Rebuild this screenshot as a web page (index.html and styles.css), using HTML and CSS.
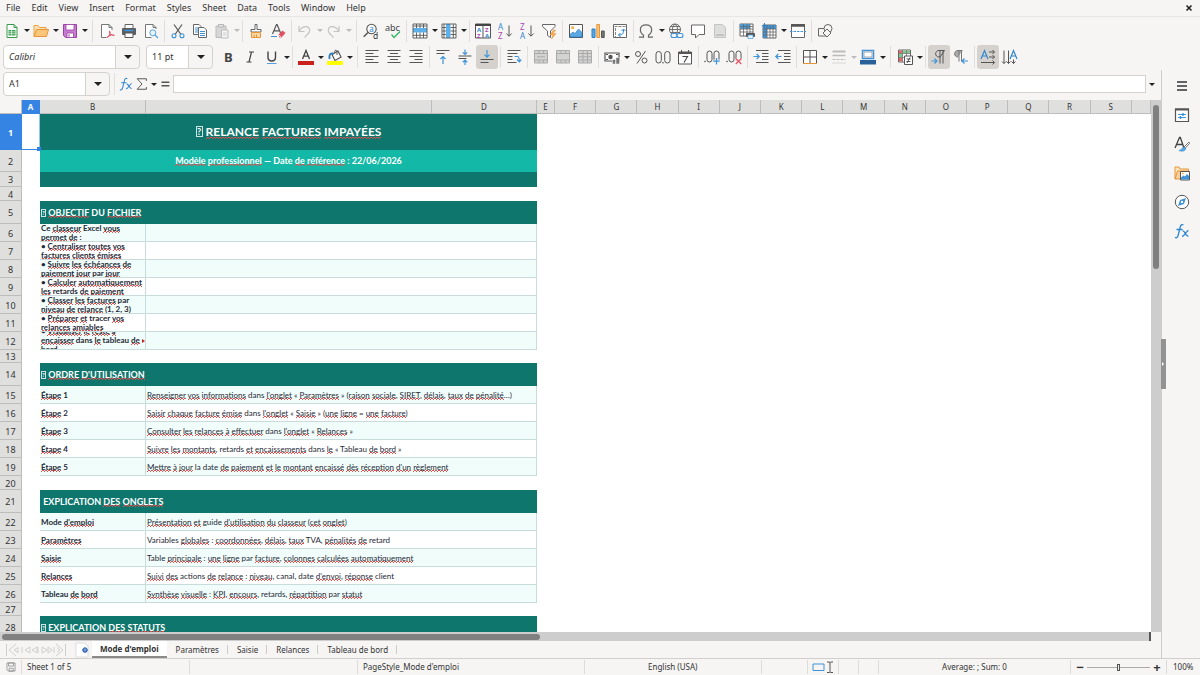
FILE: index.html
```html
<!DOCTYPE html>
<html lang="fr">
<head>
<meta charset="utf-8">
<title>Relance factures impayées</title>
<link rel="stylesheet" href="styles.css">
</head>
<body>
<nav class="menubar" lang="en">
  <button>File</button><button>Edit</button><button>View</button><button>Insert</button><button>Format</button><button>Styles</button><button>Sheet</button><button>Data</button><button>Tools</button><button>Window</button><button>Help</button>
  <button class="close" aria-label="Close"><svg viewBox="0 0 8 8"><path d="M1.5 1.5l5 5M6.5 1.5l-5 5" stroke="#222" stroke-width="1.6"/></svg></button>
</nav>

<div class="toolbar" role="toolbar" aria-label="Standard">
  <button class="ic" aria-label="New"><svg viewBox="0 0 16 16"><path d="M3 1.5h7l3 3v10H3z" fill="#fff" stroke="#3a9a4c"/><path d="M10 1.5v3h3" stroke="#3a9a4c"/><path d="M4.5 7h7v5.500h-7z" fill="#41a355"/><path d="M4.500 8.800h7M4.500 10.700h7M7.500 7v5.500" stroke="#fff" stroke-width=".6"/></svg></button><button class="ar" aria-label="New options"></button>
  <button class="ic" aria-label="Open"><svg viewBox="0 0 16 16"><path d="M1 13.500v-11h4l1.500 2H13v3" fill="#fbe0b4" stroke="#e8a33d"/><path d="M1 13.500l2.500-7H15.500l-2 7z" fill="#fbc679" stroke="#e8953a"/></svg></button><button class="ar" aria-label="Open options"></button>
  <button class="ic" aria-label="Save"><svg viewBox="0 0 16 16"><path d="M1.500 1.500h13v13h-11l-2-2z" fill="#c77bd0" stroke="#9c41a8"/><path d="M4 1.500h8v5.500H4z" fill="#fff" stroke="#9c41a8" stroke-width=".8"/><path d="M5 10h6.500v4.500H5z" fill="#fff" stroke="#9c41a8" stroke-width=".8"/><path d="M7 11.200v2.500" stroke="#9c41a8"/></svg></button><button class="ar" aria-label="Save options"></button>
  <i class="sep wide"></i>
  <button class="ic" aria-label="Export as PDF"><svg viewBox="0 0 16 16"><path d="M13 7V4.500l-3-3H2.500v13h5" fill="#fff" stroke="#777"/><path d="M10 1.500v3h3" stroke="#777"/><path d="M8 14.500c3-2 3.500-5 2.700-6.200-1.300.7 1.300 4.500 4.300 4-1-1.300-4.500-.3-7 2.200z" stroke="#e05a6b" stroke-width="1.100"/></svg></button>
  <button class="ic" aria-label="Print"><svg viewBox="0 0 16 16"><path d="M4 5V1.500h8V5" fill="#fff" stroke="#666"/><rect x="1" y="5" width="14" height="7" rx="1" fill="#5a5f63"/><path d="M3.500 7.500h9" stroke="#3f93d6" stroke-width="1.500"/><path d="M4 10h8v4.500H4z" fill="#fff" stroke="#555"/></svg></button>
  <button class="ic" aria-label="Print preview"><svg viewBox="0 0 16 16"><path d="M13 6V4.500l-3-3H2.500v13h6" fill="#fff" stroke="#777"/><path d="M10 1.500v3h3" stroke="#777"/><circle cx="9.800" cy="9.800" r="3" fill="#e8f4fd" stroke="#57a2dd"/><path d="M12 12l3 3" stroke="#57a2dd" stroke-width="1.300"/></svg></button>
  <i class="sep"></i>
  <button class="ic" aria-label="Cut"><svg viewBox="0 0 16 16"><path d="M4 1.500l7 10M12 1.500l-7 10" stroke="#555" stroke-width="1.200"/><circle cx="4" cy="12.800" r="2" stroke="#3f93d6" stroke-width="1.100"/><circle cx="12" cy="12.800" r="2" stroke="#3f93d6" stroke-width="1.100"/></svg></button>
  <button class="ic" aria-label="Copy"><svg viewBox="0 0 16 16"><path d="M1.500 1.500h5.500l2 2v8H1.500z" fill="#fff" stroke="#666"/><path d="M3 5h4M3 7h3M3 9h3" stroke="#3f93d6"/><path d="M6.500 4.500h5.500l2.500 2.500v7.500h-8z" fill="#fff" stroke="#666"/><path d="M8 8.500h5M8 10.500h5M8 12.500h5" stroke="#3f93d6"/></svg></button>
  <button class="ic" aria-label="Paste"><svg viewBox="0 0 16 16"><path d="M2 3h10v11.500H2z" fill="#d7d7d5" stroke="#bbb"/><path d="M4.500 1.500h5V4h-5z" fill="#e8e8e8" stroke="#b3b3b3"/><path d="M7.500 7h6.500v8H7.500z" fill="#f6f6f6" stroke="#bbb"/><path d="M9 10h3.500M9 12h3.500" stroke="#ccc"/></svg></button><button class="ar off" aria-label="Paste options"></button>
  <i class="sep"></i>
  <button class="ic" aria-label="Clone formatting"><svg viewBox="0 0 16 16"><path d="M7 1.500h2v5h4V9H3V6.500h4z" fill="#fff" stroke="#666"/><path d="M3.500 9.500h9v5h-9z" fill="#fbd9a5" stroke="#e8953a"/><path d="M6 11.500v3M8.500 11.500v3" stroke="#e8953a"/></svg></button>
  <button class="ic" aria-label="Clear formatting"><svg viewBox="0 0 16 16"><path d="M2.500 11L6.500 1.500h.6L11 11M4 7.800h5.800" stroke="#555" stroke-width="1.200"/><path d="M1 13.500h6" stroke="#3f93d6"/><path d="M8.500 11.500l4-4 3 2.500-4 4.500h-2z" fill="#e35260"/><path d="M8.500 11.500l2.700 2.700" stroke="#fff" stroke-width=".7"/></svg></button>
  <i class="sep"></i>
  <button class="ic" aria-label="Undo"><svg viewBox="0 0 16 16"><path d="M2 3v5.500h5.500M2.300 8.300C5 2.500 12 2 12.700 7c.4 3-3 5-5.200 7.500" stroke="#c4c4c2" stroke-width="1.200"/></svg></button><button class="ar off" aria-label="Undo steps"></button>
  <button class="ic" aria-label="Redo"><svg viewBox="0 0 16 16"><path d="M13 3v5.500H7.500M12.700 8.300C10 2.500 3 2 2.300 7c-.4 3 3 5 5.200 7.500" stroke="#c4c4c2" stroke-width="1.200"/></svg></button><button class="ar off" aria-label="Redo steps"></button>
  <i class="sep wide"></i>
  <button class="ic" aria-label="Find and replace"><svg viewBox="0 0 16 16"><circle cx="8.500" cy="6" r="4.700" fill="#fff" stroke="#555" stroke-width="1.100"/><path d="M5 9.500L.7 13.800" stroke="#555" stroke-width="1.500"/><text x="6.300" y="8.500" font-size="8" fill="#2680cc">a</text><text x="10" y="15.500" font-size="8.500" fill="#333" stroke="#f6f5f4" stroke-width="1.500" paint-order="stroke">d</text></svg></button>
  <button class="ic" aria-label="Spelling"><svg viewBox="0 0 16 16"><text x="0" y="8" font-size="9" fill="#444">abc</text><path d="M6.500 11.500l2.500 3 6-6" stroke="#35b464" stroke-width="1.300"/></svg></button>
  <i class="sep"></i>
  <button class="ic" aria-label="Row"><svg viewBox="0 0 16 16"><path d="M1 1h14v14H1z" fill="#fff"/><path d="M1 5h14v4.500H1z" fill="#5cb0ec"/><path d="M1 1h14v14H1zM4.500 1v4M8 1v4M11.500 1v4M4.500 9.500V15M8 9.500V15M11.500 9.500V15M1 12.300h14M1 3h14" stroke="#555" stroke-width=".9"/></svg></button><button class="ar" aria-label="Row options"></button>
  <button class="ic" aria-label="Column"><svg viewBox="0 0 16 16"><path d="M1 1h14v14H1z" fill="#fff"/><path d="M5 1h4.500v14H5z" fill="#5cb0ec"/><path d="M1 1h14v14H1zM1 4.500h4M1 8h4M1 11.500h4M9.500 4.500H15M9.500 8H15M9.500 11.500H15M12.300 1v14M3 1v14" stroke="#555" stroke-width=".9"/></svg></button><button class="ar" aria-label="Column options"></button>
  <i class="sep"></i>
  <button class="ic" aria-label="Sort"><svg viewBox="0 0 16 16"><path d="M.5 1h15v14H.5z" fill="#fff" stroke="#555"/><path d="M0 2h16" stroke="#444" stroke-width="2"/><path d="M8 2v13" stroke="#555"/><g font-size="6" font-weight="bold"><text x="2" y="8.500" fill="#2f86d0">A</text><text x="2" y="14.500" fill="#a94ab5">Z</text><text x="10" y="8.500" fill="#a94ab5">Z</text><text x="10" y="14.500" fill="#2f86d0">A</text></g></svg></button>
  <button class="ic" aria-label="Sort ascending"><svg viewBox="0 0 16 16"><text x="1" y="7" font-size="8" fill="#2f86d0">A</text><text x="1" y="15.500" font-size="8" fill="#a94ab5">Z</text><path d="M12 2.500v10.500M9.300 10.500l2.700 2.700 2.700-2.700" stroke="#555"/></svg></button>
  <button class="ic" aria-label="Sort descending"><svg viewBox="0 0 16 16"><text x="1" y="7" font-size="8" fill="#a94ab5">Z</text><text x="1" y="15.500" font-size="8" fill="#2f86d0">A</text><path d="M12 2.500v10.500M9.300 10.500l2.700 2.700 2.700-2.700" stroke="#555"/></svg></button>
  <button class="ic" aria-label="AutoFilter"><svg viewBox="0 0 16 16"><path d="M1.500 1.500h12.500v2L9.500 8v6.500l-3-2V8l-5-4.500z" fill="#fff" stroke="#666"/><path d="M12.500 7l-3.500 5h3l-1.500 4 4.500-5.500h-3L14.500 7z" fill="#f9b057" stroke="#e8953a" stroke-width=".6"/></svg></button>
  <i class="sep"></i>
  <button class="ic" aria-label="Insert image"><svg viewBox="0 0 16 16"><path d="M1.500 1.500h13v13h-13z" fill="#fff" stroke="#555"/><circle cx="4.700" cy="4.700" r="1.600" fill="#f8b25c"/><path d="M2 14v-2.500l3-2.500 2 1.500L10.500 6 14 9.500V14z" fill="#5aa9e3" stroke="#2f7fc1" stroke-width=".7"/></svg></button>
  <button class="ic" aria-label="Insert chart"><svg viewBox="0 0 16 16"><path d="M2 6h3v8.500H2z" fill="#5aa9e3" stroke="#2f7fc1"/><path d="M6.800 1.500h2.700v13H6.800z" fill="#fbc679" stroke="#e8953a"/><path d="M11.500 8h2.700v6.500h-2.700z" fill="#777" stroke="#555"/></svg></button>
  <button class="ic" aria-label="Pivot table"><svg viewBox="0 0 16 16"><path d="M1.500 1.500h13v13h-13z" fill="#fff" stroke="#666"/><path d="M2.500 3.500h11.500M3.500 5v9" stroke="#888" stroke-dasharray="3 1"/><path d="M6.500 12c4 0 5-1 5-5.500M9.500 8l2-2 2 2M8.500 10l-2 2 2 2" stroke="#2f86d0"/></svg></button>
  <i class="sep"></i>
  <button class="ic" aria-label="Special character"><svg viewBox="0 0 16 16"><path d="M1 14.200h4.500v-2C1 9 1 1.800 8 1.800S15 9 10.500 12.200v2H15" stroke="#666" stroke-width="1.200" transform="translate(-1 0)"/></svg></button><button class="ar" aria-label="More characters"></button>
  <button class="ic" aria-label="Hyperlink"><svg viewBox="0 0 16 16"><circle cx="7" cy="6.500" r="5.500" stroke="#666"/><path d="M1.500 6.500h11M7 1c-3.500 3-3.500 8 0 11M7 1c3.500 3 3.500 8 0 11M2.500 3.500h9M2.500 9.500h9" stroke="#666" stroke-width=".9"/><rect x="3" y="10.500" width="6" height="4" rx="2" fill="#f6f5f4" stroke="#3f93d6" stroke-width="1.100"/><rect x="9" y="10.500" width="6" height="4" rx="2" fill="#f6f5f4" stroke="#3f93d6" stroke-width="1.100"/></svg></button>
  <button class="ic" aria-label="Comment"><svg viewBox="0 0 16 16"><path d="M1.500 2h13v9.500H9L5.500 15v-3.500h-4z" fill="#fff" stroke="#666"/></svg></button>
  <button class="ic" aria-label="Headers and footers"><svg viewBox="0 0 16 16"><path d="M2.500 1.500h8l3 3v10h-11z" fill="#dededc" stroke="#c4c4c2"/><path d="M4 11h8v2H4z" fill="#c4c4c2"/></svg></button>
  <i class="sep"></i>
  <button class="ic" aria-label="Print area"><svg viewBox="0 0 16 16"><path d="M1 1h13v12H1z" fill="#fff" stroke="#666"/><path d="M1 1h10v5H1z" fill="#4a9fde"/><path d="M1 3.500h13M1 6h13M1 9h13M4.500 1v12M8 1v12M11 1v12" stroke="#666" stroke-width=".8"/><rect x="7" y="10" width="9" height="4" rx="1" fill="#555"/><path d="M9 12h5v3.500H9z" fill="#e8f4fd" stroke="#4a9fde" stroke-width=".7"/></svg></button>
  <button class="ic" aria-label="Freeze rows and columns"><svg viewBox="0 0 16 16"><path d="M2 2h13v13H2z" fill="#fff" stroke="#666"/><path d="M2 2h13v4H2zM2 6h4v9H2z" fill="#3f93d6"/><path d="M2 6h13M2 9h13M2 12h13M6 2v13M9 2v13M12 2v13" stroke="#666" stroke-width=".8"/><path d="M3.500 0v5M1 2.500h5" stroke="#2f7fc1"/></svg></button><button class="ar" aria-label="Freeze options"></button>
  <button class="ic" aria-label="Split window"><svg viewBox="0 0 16 16"><path d="M1.500 1.500h13v13h-13z" fill="#fff" stroke="#666"/><path d="M1 2.500h14" stroke="#555" stroke-width="2.500"/><path d="M0 8.500h16" stroke="#3f93d6" stroke-dasharray="2.500 1"/></svg></button>
  <i class="sep"></i>
  <button class="ic" aria-label="Draw functions"><svg viewBox="0 0 16 16"><path d="M1.500 5.500h7.500v7.500H1.500z" stroke="#666"/><circle cx="11" cy="5.500" r="4" fill="#f6f5f4" stroke="#666"/><path d="M10 6l4 4-4 4-4-4z" fill="#f6f5f4" stroke="#666"/></svg></button>
</div>

<div class="toolbar second" role="toolbar" aria-label="Formatting">
  <span class="combo font"><select aria-label="Font name"><option>Calibri</option></select></span>
  <span class="combo size"><select aria-label="Font size"><option>11 pt</option></select></span>
  <button class="ic" aria-label="Bold"><svg viewBox="0 0 16 16"><text x="4" y="13" font-size="13" font-weight="bold" fill="#444">B</text></svg></button>
  <button class="ic" aria-label="Italic"><svg viewBox="0 0 16 16"><path d="M7 3h5M4.500 13h5M9.500 3L7 13" stroke="#444" stroke-width="1.200"/></svg></button>
  <button class="ic" aria-label="Underline"><svg viewBox="0 0 16 16"><path d="M4 2.500v5.700c0 5 7.500 5 7.500 0V2.500" stroke="#444" stroke-width="1.400"/><path d="M3 14.500h9.500" stroke="#5a9fdc"/></svg></button><button class="ar" aria-label="Underline styles"></button>
  <i class="sep"></i>
  <button class="ic" aria-label="Font colour"><svg viewBox="0 0 16 16"><path d="M4.500 10L8 1.500 11.500 10M5.700 7.200h4.600" stroke="#444" stroke-width="1.300"/><path d="M0 12h16v4H0z" fill="#c9211e"/></svg></button><button class="ar" aria-label="Font colours"></button>
  <button class="ic" aria-label="Background colour"><svg viewBox="0 0 16 16"><path d="M5 5.500l6-3.500 3 6-6 3.500z" fill="#fff" stroke="#555" stroke-width="1.200"/><path d="M8 4C7 1 9.500 0 10 2.500V6" stroke="#555"/><path d="M2.500 10c-.5-5 1-6 4-5.500" stroke="#2f7fc1" stroke-width="1.800"/><path d="M0 12h16v4H0z" fill="#ff0"/></svg></button><button class="ar" aria-label="Background colours"></button>
  <i class="sep wide"></i>
  <button class="ic" aria-label="Align left"><svg viewBox="0 0 16 16"><path d="M1.500 1.500h13M1.500 4.500h8M1.500 7.500h13M1.500 10.500h8M1.500 13.500h13" stroke="#555"/></svg></button>
  <button class="ic" aria-label="Align centre"><svg viewBox="0 0 16 16"><path d="M1.500 1.500h13M4 4.500h8M1.500 7.500h13M4 10.500h8M1.500 13.500h13" stroke="#555"/></svg></button>
  <button class="ic" aria-label="Align right"><svg viewBox="0 0 16 16"><path d="M1.500 1.500h13M6.500 4.500h8M1.500 7.500h13M6.500 10.500h8M1.500 13.500h13" stroke="#555"/></svg></button>
  <i class="sep"></i>
  <button class="ic" aria-label="Align top"><svg viewBox="0 0 16 16"><path d="M1.500 1.500h13M1.500 4.500h8" stroke="#555"/><path d="M8 15V7.500M5.500 10L8 7.500l2.500 2.500" stroke="#3f93d6" stroke-width="1.200"/></svg></button>
  <button class="ic" aria-label="Centre vertically"><svg viewBox="0 0 16 16"><path d="M1.500 7h13M1.500 9.500h8" stroke="#555"/><path d="M8 .5v5M5.800 3.300L8 5.500l2.200-2.200M8 16v-4.500M5.800 13.300L8 11.200l2.200 2.100" stroke="#3f93d6" stroke-width="1.200"/></svg></button>
  <button class="ic on" aria-label="Align bottom"><svg viewBox="0 0 16 16"><path d="M1.500 10.500h13M1.500 13.500h8" stroke="#555"/><path d="M8 1v7M5.500 5.700L8 8.200l2.500-2.500" stroke="#3f93d6" stroke-width="1.200"/></svg></button>
  <i class="sep"></i>
  <button class="ic" aria-label="Wrap text"><svg viewBox="0 0 16 16"><path d="M1.500 1.500h13M1.500 4.500h10M1.500 7.500h5M1.500 10.500h5M1.500 13.500h9" stroke="#555"/><path d="M8.500 7.500h3c1.500 0 1.800 1 1.800 5M11 10.500l2.300 2.300 2-2.300" stroke="#3f93d6" stroke-width="1.200"/></svg></button>
  <i class="sep"></i>
  <button class="ic" aria-label="Merge and centre"><svg viewBox="0 0 16 16"><path d="M1.500 1.500h13v12.500h-13z" fill="#d3d3d1" stroke="#aaa"/><path d="M1.500 4.500h13M1.500 11h13M6 1.500v3M10.500 1.500v3M6 11v3M10.500 11v3M4 7.800h8" stroke="#aaa"/></svg></button>
  <button class="ic" aria-label="Merge cells"><svg viewBox="0 0 16 16"><path d="M1.500 1.500h13v12.500h-13z" fill="#d3d3d1" stroke="#aaa"/><path d="M1.500 4.500h13M1.500 11h13M6 1.500v3M10.500 1.500v3M6 11v3M10.500 11v3" stroke="#aaa"/></svg></button>
  <button class="ic" aria-label="Split cells"><svg viewBox="0 0 16 16"><path d="M1.500 1.500h13v12.500h-13z" fill="#d3d3d1" stroke="#aaa"/><path d="M1.500 4.500h13M1.500 7.800h13M1.500 11h13M6 1.500v12.500M10.500 1.500v12.500" stroke="#aaa"/></svg></button>
  <i class="sep"></i>
  <button class="ic" aria-label="Currency"><svg viewBox="0 0 16 16"><path d="M1 4h14v8H1z" fill="#fff" stroke="#555" stroke-width="1.200"/><circle cx="6.500" cy="8" r="2.200" fill="#555"/><path d="M2 5.500h2M2 10.500h2M12 5.500h2" stroke="#555"/><path d="M8.500 10.500h3V15h-3zM12 8.500h3.500V15H12z" fill="#777" stroke="#f6f5f4" stroke-width=".5"/></svg></button><button class="ar" aria-label="Currency formats"></button>
  <button class="ic" aria-label="Percent"><svg viewBox="0 0 16 16"><circle cx="5" cy="5" r="2.500" stroke="#555"/><circle cx="11.500" cy="11.500" r="2.500" stroke="#555"/><path d="M12.500 2L4 14.500" stroke="#555"/></svg></button>
  <button class="ic" aria-label="Number"><svg viewBox="0 0 16 16"><rect x="1" y="2.500" width="5.300" height="11.500" rx="2.600" stroke="#555"/><rect x="9.700" y="2.500" width="5.300" height="11.500" rx="2.600" stroke="#555"/><circle cx="8" cy="13.700" r=".8" fill="#555"/></svg></button>
  <button class="ic" aria-label="Date"><svg viewBox="0 0 16 16"><path d="M1.500 3h13v12h-13z" fill="#fff" stroke="#555"/><path d="M1.500 4h13" stroke="#555" stroke-width="2"/><path d="M4.500 1v3M11.500 1v3" stroke="#555"/><path d="M5.500 7.500h5L7 13.500" stroke="#444" stroke-width="1.100"/></svg></button>
  <i class="sep"></i>
  <button class="ic" aria-label="Add decimal place"><svg viewBox="0 0 16 16"><circle cx="1" cy="12.500" r=".8" fill="#555"/><rect x="3" y="2" width="5" height="11" rx="2.500" stroke="#555"/><rect x="10" y="2" width="5" height="11" rx="2.500" stroke="#555"/><path d="M12.500 9v6.500M9.200 12.200h6.500" stroke="#f6f5f4" stroke-width="3"/><path d="M12.500 9v6.500M9.200 12.200h6.500" stroke="#3f93d6" stroke-width="1.200"/></svg></button>
  <button class="ic" aria-label="Delete decimal place"><svg viewBox="0 0 16 16"><circle cx="1" cy="12.500" r=".8" fill="#555"/><rect x="3" y="2" width="5" height="11" rx="2.500" stroke="#555"/><rect x="10" y="2" width="5" height="11" rx="2.500" stroke="#555"/><path d="M9.800 9.500l5.500 5.500M15.300 9.500L9.800 15" stroke="#f6f5f4" stroke-width="3"/><path d="M9.800 9.500l5.500 5.500M15.300 9.500L9.800 15" stroke="#e35260" stroke-width="1.200"/></svg></button>
  <i class="sep"></i>
  <button class="ic" aria-label="Increase indent"><svg viewBox="0 0 16 16"><path d="M3 1.500h12.500M9 4.500h6.500M9 7.500h6.500M9 10.500h6.500M3 13.500h12.500" stroke="#555"/><path d="M.5 7.500h5.500M3.700 5L6.200 7.500l-2.500 2.500" stroke="#3f93d6" stroke-width="1.200"/></svg></button>
  <button class="ic" aria-label="Decrease indent"><svg viewBox="0 0 16 16"><path d="M3 1.500h12.500M9 4.500h6.500M9 7.500h6.500M9 10.500h6.500M3 13.500h12.500" stroke="#555"/><path d="M1 7.500h5.500M3.300 5L.8 7.500l2.500 2.500" stroke="#3f93d6" stroke-width="1.200"/></svg></button>
  <i class="sep"></i>
  <button class="ic" aria-label="Borders"><svg viewBox="0 0 16 16"><path d="M1.500 14.500v-13h13v13M8 1.500v13M1.500 8h13" stroke="#555" fill="#fff"/><path d="M1 14.500h14" stroke="#e8953a"/></svg></button><button class="ar" aria-label="Border styles"></button>
  <button class="ic" aria-label="Border line style"><svg viewBox="0 0 16 16"><path d="M1.500 2.500h13" stroke="#bbb" stroke-width="2"/><path d="M1.500 6.500h13" stroke="#bbb" stroke-width="1.500"/><path d="M1.500 10.500h13" stroke="#bbb" stroke-dasharray="3 1"/><path d="M1.500 14h13" stroke="#bbb" stroke-dasharray="1 1"/></svg></button><button class="ar off" aria-label="Line styles"></button>
  <button class="ic" aria-label="Border colour"><svg viewBox="0 0 16 16"><path d="M2.500 1.500h11v8h-11z" fill="#fff" stroke="#3f93d6" stroke-width="1.500"/><path d="M4 3h8v5H4z" stroke="#777" stroke-width=".6"/><path d="M0 11h16v4.500H0z" fill="#2a6099"/></svg></button><button class="ar" aria-label="Border colours"></button>
  <i class="sep wide"></i>
  <button class="ic" aria-label="Conditional formatting"><svg viewBox="0 0 16 16"><path d="M1.500 1h12v12h-12z" fill="#fff" stroke="#666"/><path d="M2 1.500h3.500v3H2zM2 8.500h3.500v4H2z" fill="#e46a6a"/><path d="M6 1.500h7v3H6zM2 5h3.500v3.500H2z" fill="#7cc98a"/><path d="M1.500 4.500h12M1.500 8.500h12M5.500 1v12M9.500 1v12" stroke="#777" stroke-width=".8"/><path d="M7.500 7h8v8.500h-8z" fill="#fff" stroke="#555"/><path d="M9.500 10h4M9.500 12.500h4M13 8.500l-3 5.500" stroke="#444" stroke-width=".9"/></svg></button><button class="ar" aria-label="Conditional options"></button>
  <i class="sep"></i>
  <button class="ic on" aria-label="Left to right"><svg viewBox="0 0 16 16"><path d="M13.500 1.500H8c-4.500 0-4.500 6.500 0 6.500h1zM9 1.500v13M12 1.500v13" stroke="#555"/><path d="M.5 12H6M3.500 9.500L6 12l-2.500 2.500" stroke="#3f93d6" stroke-width="1.200"/></svg></button>
  <button class="ic" aria-label="Right to left"><svg viewBox="0 0 16 16"><path d="M9.500 1.500H5c-4.500 0-4.500 6.500 0 6.500z" fill="#aaa"/><path d="M9.500 1.500H5c-4.500 0-4.500 6.500 0 6.500M6 1.500v11M8.500 1.500v11" stroke="#777"/><path d="M9 12h6M11.500 9.500L9 12l2.500 2.500" stroke="#3f93d6" stroke-width="1.200"/></svg></button>
  <i class="sep"></i>
  <button class="ic on" aria-label="Horizontal text"><svg viewBox="0 0 16 16"><path d="M1 10L4.500 1.500 8 10M2.300 7h4.400" stroke="#2f86d0" stroke-width="1.200"/><path d="M9 3h5.500M9 8h5.500M1 13.500h13.500M12.500 1l2 2-2 2M12.500 6l2 2-2 2M12.500 11.500l2 2-2 2" stroke="#555"/></svg></button>
  <button class="ic" aria-label="Vertical text"><svg viewBox="0 0 16 16"><path d="M8 10l3.500-8.500L15 10M9.300 7h4.400" stroke="#2f86d0" stroke-width="1.200"/><path d="M2 1.500v13M6.500 1.500v13M11.500 10.500v4M0 12.500l2 2 2-2M4.500 12.500l2 2 2-2M9.500 12.500l2 2 2-2" stroke="#555"/></svg></button>
</div>

<div class="work">
  <main>
    <div class="formulabar">
      <span class="namebox"><input type="text" value="A1" aria-label="Name box"><button class="ar" aria-label="Named ranges"></button></span>
      <i class="sep wide"></i>
      <button class="fb" aria-label="Function wizard"><svg viewBox="0 0 16 16"><path d="M1 14.500c2 1 3-1 3.500-3.500L6.200 4C6.600 2 8 1 9.500 2M2.500 6.500h6" stroke="#2f86d0" stroke-width="1.200"/><path d="M8.500 8c2.500-1 3 6 6 5M14.500 7.500c-2 0-4 6-6.500 6" stroke="#2f86d0" stroke-width="1.200"/></svg></button>
      <button class="fb" aria-label="Sum"><svg viewBox="0 0 16 16"><path d="M13 4.500V2H2.500L8 8l-5.500 6H13v-2.500" stroke="#555" stroke-width="1.100"/></svg></button>
      <button class="ar" aria-label="Sum options"></button>
      <button class="fb" aria-label="Formula"><svg viewBox="0 0 16 16"><path d="M4 6h9M4 10h9" stroke="#555" stroke-width="1.600"/></svg></button>
      <input class="formula" type="text" aria-label="Formula input">
      <button class="ar" aria-label="Expand formula bar"></button>
    </div>

    <div class="viewport">
      <div class="grid">
        <table>
          <colgroup><col class="rh"><col class="ca"><col class="cb"><col class="cc"><col class="cd"><col class="ca"><col span="14"><col class="ct"></colgroup>
          <thead>
            <tr><th class="corner"></th><th class="sel">A</th><th>B</th><th>C</th><th>D</th><th>E</th><th>F</th><th>G</th><th>H</th><th>I</th><th>J</th><th>K</th><th>L</th><th>M</th><th>N</th><th>O</th><th>P</th><th>Q</th><th>R</th><th>S</th><th></th></tr>
          </thead>
          <tbody>
            <tr class="h36"><th class="sel">1</th><td class="cursor"></td><td colspan="3" class="title"><span class="tofu big">?</span> <u>RELANCE</u> <u>FACTURES</u> <u>IMPAYÉES</u></td></tr>
            <tr class="h22"><th>2</th><td></td><td colspan="3" class="subtitle"><u>Modèle</u> <u>professionnel</u> — Date <u>de</u> <u>référence</u> : 22/06/2026</td></tr>
            <tr class="h15"><th>3</th><td></td><td colspan="3" class="band"></td></tr>
            <tr class="h14"><th>4</th></tr>
            <tr class="h23"><th>5</th><td></td><td colspan="3" class="band"><span class="tofu">?</span> <u>OBJECTIF</u> DU <u>FICHIER</u></td></tr>
            <tr class="row odd"><th>6</th><td></td><td class="wrap"><div><p>Ce <u>classeur</u> Excel <u>vous</u> <u>permet</u> <u>de</u> :</p></div></td><td colspan="2"></td></tr>
            <tr class="row"><th>7</th><td></td><td class="wrap"><div><p>• <u>Centraliser</u> <u>toutes</u> <u>vos</u> <u>factures</u> <u>clients</u> <u>émises</u></p></div></td><td colspan="2"></td></tr>
            <tr class="row odd"><th>8</th><td></td><td class="wrap"><div><p>• <u>Suivre</u> <u>les</u> <u>échéances</u> <u>de</u> <u>paiement</u> <u>jour</u> par <u>jour</u></p></div></td><td colspan="2"></td></tr>
            <tr class="row"><th>9</th><td></td><td class="wrap"><div><p>• <u>Calculer</u> <u>automatiquement</u> <u>les</u> retards <u>de</u> <u>paiement</u></p></div></td><td colspan="2"></td></tr>
            <tr class="row odd"><th>10</th><td></td><td class="wrap"><div><p>• <u>Classer</u> <u>les</u> <u>factures</u> par <u>niveau</u> <u>de</u> <u>relance</u> (1, 2, 3)</p></div></td><td colspan="2"></td></tr>
            <tr class="row"><th>11</th><td></td><td class="wrap"><div><p>• <u>Préparer</u> <u>et</u> tracer <u>vos</u> <u>relances</u> <u>amiables</u></p></div></td><td colspan="2"></td></tr>
            <tr class="row odd"><th>12</th><td></td><td class="wrap more"><div><p>• <u>Visualiser</u> <u>le</u> <u>reste</u> <u>à</u> <u>encaisser</u> dans <u>le</u> tableau <u>de</u> <u>bord</u></p></div></td><td colspan="2"></td></tr>
            <tr class="h13"><th>13</th></tr>
            <tr class="h23"><th>14</th><td></td><td colspan="3" class="band"><span class="tofu">?</span> <u>ORDRE</u> <u>D'UTILISATION</u></td></tr>
            <tr class="row odd"><th>15</th><td></td><td class="key"><u>Étape</u> 1</td><td colspan="2"><u>Renseigner</u> <u>vos</u> <u>informations</u> dans <u>l'onglet</u> « <u>Paramètres</u> » (<u>raison</u> <u>sociale</u>, <u>SIRET</u>, <u>délais</u>, <u>taux</u> <u>de</u> <u>pénalité</u>…)</td></tr>
            <tr class="row"><th>16</th><td></td><td class="key"><u>Étape</u> 2</td><td colspan="2"><u>Saisir</u> <u>chaque</u> <u>facture</u> <u>émise</u> dans <u>l'onglet</u> « <u>Saisie</u> » (<u>une</u> <u>ligne</u> = <u>une</u> <u>facture</u>)</td></tr>
            <tr class="row odd"><th>17</th><td></td><td class="key"><u>Étape</u> 3</td><td colspan="2"><u>Consulter</u> <u>les</u> <u>relances</u> <u>à</u> <u>effectuer</u> dans <u>l'onglet</u> « <u>Relances</u> »</td></tr>
            <tr class="row"><th>18</th><td></td><td class="key"><u>Étape</u> 4</td><td colspan="2"><u>Suivre</u> <u>les</u> <u>montants</u>, retards <u>et</u> <u>encaissements</u> dans <u>le</u> « Tableau <u>de</u> <u>bord</u> »</td></tr>
            <tr class="row odd"><th>19</th><td></td><td class="key"><u>Étape</u> 5</td><td colspan="2"><u>Mettre</u> <u>à</u> <u>jour</u> la date <u>de</u> <u>paiement</u> <u>et</u> <u>le</u> <u>montant</u> <u>encaissé</u> <u>dès</u> <u>réception</u> <u>d'un</u> <u>règlement</u></td></tr>
            <tr class="h14"><th>20</th></tr>
            <tr class="h23"><th>21</th><td></td><td colspan="3" class="band">&nbsp;EXPLICATION <u>DES</u> <u>ONGLETS</u></td></tr>
            <tr class="row odd"><th>22</th><td></td><td class="key">Mode <u>d'emploi</u></td><td colspan="2"><u>Présentation</u> <u>et</u> guide <u>d'utilisation</u> <u>du</u> <u>classeur</u> (<u>cet</u> <u>onglet</u>)</td></tr>
            <tr class="row"><th>23</th><td></td><td class="key"><u>Paramètres</u></td><td colspan="2">Variables <u>globales</u> : <u>coordonnées</u>, <u>délais</u>, <u>taux</u> TVA, <u>pénalités</u> <u>de</u> retard</td></tr>
            <tr class="row odd"><th>24</th><td></td><td class="key"><u>Saisie</u></td><td colspan="2">Table <u>principale</u> : <u>une</u> <u>ligne</u> par <u>facture</u>, <u>colonnes</u> <u>calculées</u> <u>automatiquement</u></td></tr>
            <tr class="row"><th>25</th><td></td><td class="key"><u>Relances</u></td><td colspan="2"><u>Suivi</u> <u>des</u> actions <u>de</u> <u>relance</u> : <u>niveau</u>, canal, date <u>d'envoi</u>, <u>réponse</u> client</td></tr>
            <tr class="row odd"><th>26</th><td></td><td class="key">Tableau <u>de</u> <u>bord</u></td><td colspan="2"><u>Synthèse</u> <u>visuelle</u> : <u>KPI</u>, <u>encours</u>, retards, <u>répartition</u> par <u>statut</u></td></tr>
            <tr class="h13"><th>27</th></tr>
            <tr class="h23"><th>28</th><td></td><td colspan="3" class="band"><span class="tofu">?</span> EXPLICATION <u>DES</u> <u>STATUTS</u></td></tr>
          </tbody>
        </table>
      </div>
      <div class="vscroll"><div class="thumb"></div></div>
      <div class="hscroll"><div class="thumb"></div></div>
    </div>

    <div class="tabs" role="tablist">
      <button class="tabnav" aria-label="Sheet navigation"><svg viewBox="0 0 62 14"><path d="M1.500 1v12M11 1L4 7l7 6M13 4.500L9 7l4 2.500V4.500M17 4v6M25 4l-5 3 5 3zM32 4l-5 3 5 3zM33 4v6M37 4l5 3-5 3zM43 4l4 3-4 3zM49 4v6M51 1l7 6-7 6M52 4.500L55 7l-3 2.500M60.500 1v12" stroke="#cfcfcd"/></svg></button>
      <button class="addtab" aria-label="Add sheet"><svg viewBox="0 0 14 16"><path d="M1 1h9l3 3v11H1z" fill="#fff" stroke="#ddd"/><circle cx="10" cy="8" r="2" stroke="#2a5fb8" stroke-width="1.100"/><path d="M10 5v6M7 8h6" stroke="#2a5fb8" stroke-width=".8"/></svg></button>
      <button class="tab active" role="tab" aria-selected="true">Mode d'emploi</button>
      <button class="tab" role="tab">Paramètres</button>
      <button class="tab" role="tab">Saisie</button>
      <button class="tab" role="tab">Relances</button>
      <button class="tab" role="tab">Tableau de bord</button>
    </div>
  </main>

  <aside aria-label="Sidebar">
    <button class="handle" aria-label="Hide sidebar"></button>
    <button aria-label="Sidebar settings"><svg viewBox="0 0 16 16"><path d="M3 4h10M3 8h10M3 12h10" stroke="#333" stroke-width="1.500"/></svg></button>
    <button aria-label="Properties"><svg viewBox="0 0 16 16"><path d="M1.500 2h13v12.500h-13z" fill="#fff" stroke="#555" stroke-width="1.200"/><path d="M1 2.500h14" stroke="#555" stroke-width="2"/><path d="M4 7.500h8M4 10.500h8" stroke="#3f93d6"/><path d="M9 6v3M6.500 9v3" stroke="#3f93d6" stroke-width="1.500"/></svg></button>
    <button aria-label="Styles"><svg viewBox="0 0 16 16"><path d="M1 12L5.500 1.500h.8L10 12M2.800 8.500h6" stroke="#444" stroke-width="1.300"/><path d="M15 6l-5 5 1 1.500 4.500-5z" fill="#fff" stroke="#555" stroke-width=".8"/><path d="M10.500 11c-3 0-2 3.500-5.500 3.500 4 1.500 7 0 6.500-2.500z" fill="#5aa9e3" stroke="#2f86d0" stroke-width=".7"/></svg></button>
    <button aria-label="Gallery"><svg viewBox="0 0 16 16"><path d="M1 14V2h4l1 2h8.500v3" fill="#fde3bd" stroke="#e8953a"/><path d="M1 14l2.500-8H15v8z" fill="#fbd09a" stroke="#e8953a"/><path d="M6.500 6.500h9v8.500h-9z" fill="#fff" stroke="#555"/><path d="M7 14.500v-2l2.500-2 1.500 1 2-2.500 2 2v3.500z" fill="#3f93d6"/><circle cx="8.700" cy="8.500" r=".9" fill="#f8b25c"/></svg></button>
    <button aria-label="Navigator"><svg viewBox="0 0 16 16"><circle cx="8" cy="8" r="6.700" fill="#fff" stroke="#555"/><path d="M12 4l-2 6-6 2 2-6z" fill="#3f93d6"/><circle cx="8" cy="8" r="1.200" fill="#fff"/></svg></button>
    <button aria-label="Functions"><svg viewBox="0 0 16 16"><path d="M1 14.500c2 1 3-1 3.500-3.500L6.200 4C6.600 2 8 1 9.500 2M2.500 6.500h6" stroke="#2f86d0" stroke-width="1.300"/><path d="M8.500 8c2.500-1 3 6 6 5M14.500 7.500c-2 0-4 6-6.500 6" stroke="#2f86d0" stroke-width="1.300"/></svg></button>
  </aside>
</div>

<footer class="status" lang="en">
  <span class="saved"><svg viewBox="0 0 16 16"><path d="M1.500 1.500h13v13h-11l-2-2zM4 1.500h8v5H4zM5 10h6.500v4.500H5z" stroke="#888" stroke-width="1.200"/></svg></span>
  <span class="sheetno">Sheet 1 of 5</span>
  <span class="selection"></span>
  <span class="pagestyle">PageStyle_Mode d'emploi</span>
  <span class="lang">English (USA)</span>
  <span class="blank"></span>
  <span class="mode"><svg viewBox="0 0 22 14"><path d="M1 4h11v6.500H1z" stroke="#3f93d6"/><path d="M15 2h2.500l.5.500.5-.5H21M18 2v10M15 12.500h2.500l.5-.5.5.5H21" stroke="#555"/></svg></span>
  <span class="cell"></span>
  <span class="cell"></span>
  <span class="sum">Average: ; Sum: 0</span>
  <span class="zoom"><button aria-label="Zoom out">−</button><input type="range" min="0" max="100" value="50" aria-label="Zoom"><button aria-label="Zoom in">+</button></span>
  <span class="percent">100%</span>
</footer>
</body>
</html>
```
FILE: styles.css
```css
* { box-sizing: border-box; }
html, body { height: 100%; }
body {
  margin: 0;
  display: flex;
  flex-direction: column;
  overflow: hidden;
  background: #f6f5f4;
  color: #333;
  font: 8px/12px "Noto Sans", sans-serif;
}
button, input, select {
  margin: 0;
  padding: 0;
  border: 0;
  background: none;
  color: inherit;
  font: inherit;
  outline: 0;
}
svg { display: block; fill: none; overflow: visible; font-family: "Noto Sans", sans-serif; }

/* Menu */
.menubar {
  display: flex;
  align-items: center;
  flex: none;
  height: 17px;
  padding: 0 7px 0 6px;
  gap: 11px;
  border-bottom: 1px solid #e6e5e3;
  font-size: 9px;
}
.menubar .close { width: 8px; margin-left: auto; }

/* Toolbars */
.toolbar {
  display: flex;
  align-items: center;
  flex: none;
  height: 27px;
  padding-left: 1px;
}
.toolbar.second { height: 26px; padding-left: 3px; }
.ic { flex: none; width: 22px; height: 24px; padding: 0 3px; border-radius: 3px; }
.ic.on { background: #d5d2ce; }
.ar { flex: none; display: grid; place-items: center; width: 7px; height: 24px; }
.ar::after, .combo::after {
  content: "";
  border: 3px solid transparent;
  border-top-color: #222;
  border-bottom: 0;
}
.ar.off::after { border-top-color: #bbb; }
.sep { flex: none; width: 5px; height: 22px; background: linear-gradient(#e0dfdd, #e0dfdd) center / 1px 100% no-repeat; }
.sep.wide { width: 8px; }

.combo, .namebox {
  position: relative;
  flex: none;
  height: 24px;
  border: 1px solid #d5d2ce;
  border-radius: 4px;
  background: linear-gradient(90deg, #fff calc(100% - 24px), #d5d2ce calc(100% - 24px), #d5d2ce calc(100% - 23px), #f6f5f4 calc(100% - 23px));
  font-size: 9px;
}
.combo select { width: 100%; height: 100%; padding-left: 5px; appearance: none; }
.combo::after { position: absolute; right: 7px; top: 9px; border-width: 4px 4px 0; pointer-events: none; }
.combo.font { width: 137px; margin-right: 6px; font-style: italic; }
.combo.size { width: 67px; margin-right: 4px; }

/* Work area */
.work { display: flex; flex: 1; min-height: 0; }
main { display: flex; flex-direction: column; flex: 1; min-width: 0; }
.formulabar { display: flex; align-items: center; flex: none; height: 30px; padding: 0 6px 2px 3px; }
.namebox { display: flex; width: 107px; }
.namebox input { flex: 1; min-width: 0; padding-left: 5px; }
.namebox .ar { width: 23px; height: 22px; }
.namebox .ar::after { border-width: 4px 4px 0; }
.fb { flex: none; width: 16px; height: 16px; padding: 1px; }
.formula { flex: 1; min-width: 0; height: 18px; margin-right: 2px; border: 1px solid #d5d2ce; background: #fff; }

.viewport {
  display: grid;
  flex: 1;
  min-height: 0;
  grid-template: minmax(0, 1fr) 9px / minmax(0, 1fr) 10px;
}
.grid { overflow: hidden; background: #fff; }
.vscroll { padding: 5px 2px; background: #cdcdcd; }
.vscroll .thumb { width: 6px; height: 164px; border-radius: 3px; background: #808080; }
.hscroll { padding: 2px; background: #cdcdcd; border-right: 2px solid #555; }
.hscroll .thumb { width: 47%; height: 6px; border-radius: 3px; background: #808080; }

table { width: 100%; table-layout: fixed; border-collapse: separate; border-spacing: 0; }
.rh { width: 22px; }
.ca { width: 18px; }
.cb { width: 106px; }
.cc { width: 286px; }
.cd { width: 105px; }
.ct { width: 19px; }
th {
  padding: 0;
  border-right: 1px solid #bdbdbd;
  border-bottom: 1px solid #bdbdbd;
  background: #dfdfde;
  font-weight: normal;
  line-height: 10px;
}
thead th { height: 14px; }
.corner { background: #f6f5f4; }
th.sel { background: #3584e4; border-color: #3584e4; color: #fff; font-weight: bold; }
tbody th { padding-top: 2px; font-size: 9px; }
td {
  padding: 0 1px;
  font-family: Lato, sans-serif;
  font-size: 8px;
  line-height: 10px;
  white-space: nowrap;
  color: #1f2937;
}
.h36 { height: 36px; }
.h22 { height: 22px; }
.h15 { height: 15px; }
.h14 { height: 14px; }
.h13 { height: 13px; }
.h23 { height: 23px; }
.row { height: 18px; }
.row td:nth-child(n+3) { border-right: 1px solid #c9dcdc; border-bottom: 1px solid #c9dcdc; }
.row.odd td:nth-child(n+3) { background: #f0fdfa; }
.band, .title { background: #0f766e; color: #fff; font-weight: bold; font-size: 9px; }
.title { text-align: center; font-size: 12px; line-height: 18px; }
.subtitle { background: #14b8a6; color: #fff; font-weight: bold; font-size: 9px; text-align: center; }
.key { font-weight: bold; }
.wrap { position: relative; font-weight: bold; }
.wrap div {
  display: flex;
  align-items: center;
  height: 17px;
  overflow: hidden;
}
.wrap p { margin: 0; line-height: 9px; white-space: normal; }
.more::after {
  content: "";
  position: absolute;
  right: 0;
  top: 7px;
  border: 2px solid transparent;
  border-left: 3px solid #c9211e;
  border-right: 0;
}
.cursor { position: relative; border-right: 1px solid #9cc4f2; border-bottom: 1px solid #3584e4; }
.cursor::after { content: ""; position: absolute; right: -2px; bottom: -2px; width: 4px; height: 4px; background: #3584e4; }

/* Spelling marks: two dotted rows, one shifted, form a fine zigzag */
u {
  text-decoration: none;
  background:
    repeating-linear-gradient(90deg, #e0504c 0 1px, transparent 1px 3px) 0 100% / 100% 1px no-repeat,
    repeating-linear-gradient(90deg, transparent 0 1px, #e0504c 1px 3px) 0 calc(100% - 1px) / 100% 1px no-repeat;
}
.tofu {
  display: inline-block;
  width: 5px;
  height: 8px;
  border: 1px solid #cfe4e2;
  font-size: 6px;
  line-height: 6px;
  text-align: center;
  vertical-align: 1px;
}
.tofu.big { width: 7px; height: 11px; font-size: 9px; line-height: 9px; }

/* Sheet tabs */
.tabs { display: flex; align-items: center; flex: none; height: 17px; padding-left: 5px; }
.tabnav { width: 62px; height: 14px; margin-right: 8px; }
.addtab { width: 14px; height: 16px; margin-right: 3px; }
.tab { height: 17px; padding: 0 9px; background: linear-gradient(#ccc, #ccc) right / 1px 9px no-repeat; }
.tab.active { padding: 0 8px; border-bottom: 2px solid #8a8a8a; background: #fff; font-weight: bold; }

/* Sidebar */
aside {
  position: relative;
  display: flex;
  flex-direction: column;
  flex: none;
  gap: 13px;
  width: 39px;
  padding: 8px 0 0 12px;
  border-left: 1px solid #cfcecc;
}
aside button { width: 16px; height: 16px; }
aside .handle { position: absolute; left: -1px; top: 50%; width: 5px; height: 50px; transform: translateY(-50%); background: #929292; }
aside .handle::after {
  content: "";
  display: block;
  width: 3px;
  margin-left: 1px;
  border: 2px solid transparent;
  border-left-color: #fff;
  border-right: 0;
}

/* Status bar */
.status { display: flex; align-items: center; flex: none; height: 17px; border-top: 1px solid #d0cfcd; }
.status > span { height: 14px; border-right: 1px solid #dddcda; line-height: 14px; white-space: nowrap; }
.status .saved { width: 22px; padding: 2px 5px 0 6px; }
.sheetno { width: 168px; padding-left: 5px; }
.selection { width: 168px; }
.pagestyle { flex: 224; padding-left: 5px; }
.lang { flex: 179; text-align: center; }
.blank { width: 46px; }
.mode { width: 31px; padding: 0 4px; }
.cell { width: 20px; }
.sum { flex: 194; text-align: center; }
.zoom { display: flex; align-items: center; width: 96px; padding: 0 4px; gap: 2px; }
.zoom button { width: 10px; font-size: 13px; font-weight: bold; line-height: 12px; }
.zoom input { flex: 1; min-width: 0; height: 10px; appearance: none; background: linear-gradient(#aaa, #aaa) center / 100% 1px no-repeat; }
.zoom input::-webkit-slider-thumb { appearance: none; width: 3px; height: 7px; border: 1px solid #555; background: #eee; }
.status .percent { width: 33px; padding-left: 6px; border-right: 0; }
```
